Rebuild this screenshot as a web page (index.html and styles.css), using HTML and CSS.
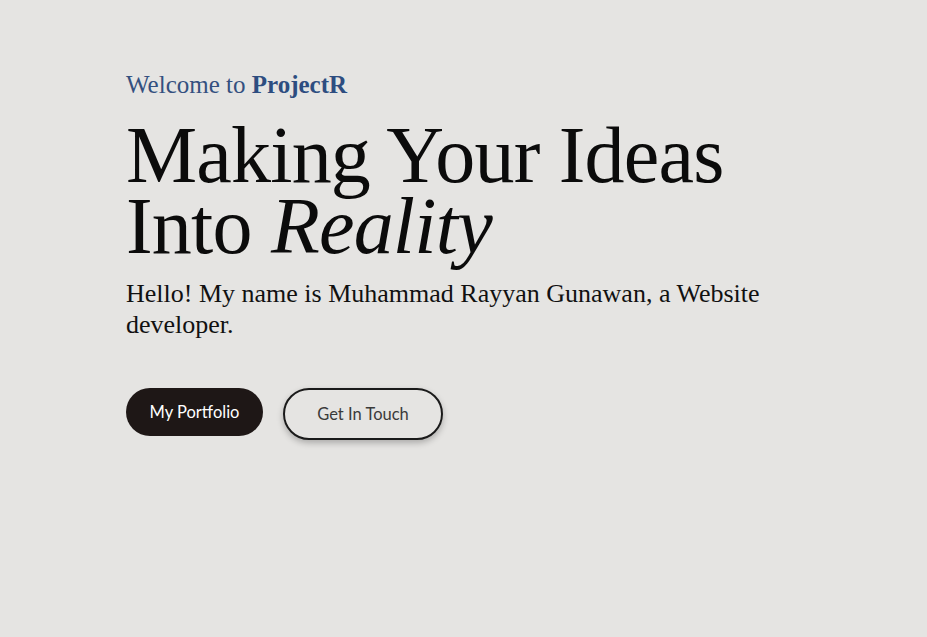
FILE: index.html
```html
<!DOCTYPE html>
<html>
<head>
<meta charset="utf-8">
<link rel="stylesheet" href="styles.css">
</head>
<body>
<main class="hero">
  <p class="welcome">Welcome to <strong>ProjectR</strong></p>
  <h1 class="title">Making Your Ideas<br>Into <em>Reality</em></h1>
  <p class="intro">Hello! My name is Muhammad Rayyan Gunawan, a Website developer.</p>
  <div class="actions">
    <a class="btn btn-dark" href="#">My Portfolio</a>
    <a class="btn btn-outline" href="#">Get In Touch</a>
  </div>
</main>
</body>
</html>
```
FILE: styles.css
```css
html, body {
  margin: 0;
  padding: 0;
  background: #e5e4e2;
  height: 100%;
}
.hero {
  padding: 70px 0 0 126px;
  font-family: "Liberation Serif", "Times New Roman", serif;
}
.welcome {
  margin: 0;
  font-size: 25px;
  line-height: 30px;
  color: #34507f;
}
.welcome strong {
  font-weight: 700;
  color: #2d4d80;
}
.title {
  margin: 20px 0 0;
  font-size: 80px;
  font-weight: 400;
  line-height: 71px;
  color: #0b0b0b;
  letter-spacing: -0.8px;
}
.title em {
  font-style: italic;
}
.intro {
  margin: 16px 0 0;
  max-width: 680px;
  font-size: 26px;
  line-height: 31px;
  color: #111;
}
.actions {
  margin-top: 48px;
  display: flex;
  gap: 20px;
  align-items: flex-start;
}
.btn {
  display: inline-flex;
  align-items: center;
  justify-content: center;
  box-sizing: border-box;
  border-radius: 26px;
  font-family: Lato, "Open Sans", sans-serif;
  font-size: 16.5px;
  text-decoration: none;
}
.btn-dark {
  width: 137px;
  height: 48px;
  background: #1e1716;
  color: #fff;
}
.btn-outline {
  width: 160px;
  height: 52px;
  border: 2px solid #1a1a1a;
  color: #3a3a3a;
  background: transparent;
  box-shadow: 0 3px 6px rgba(0,0,0,0.25);
}
```
